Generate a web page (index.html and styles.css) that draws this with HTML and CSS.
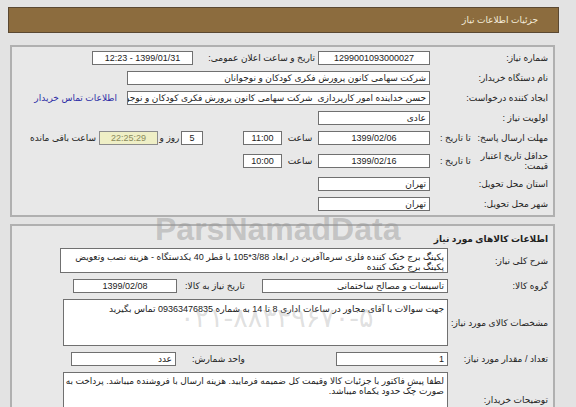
FILE: index.html
```html
<!DOCTYPE html>
<html lang="fa">
<head>
    <meta charset="UTF-8">
    <title>جزئیات اطلاعات نیاز</title>
    <link rel="stylesheet" href="styles.css">
</head>
<body>
    <div class="page" dir="rtl">
        <div class="title-bar">جزئیات اطلاعات نیاز</div>

        <div class="panel info">
            <div class="row">
                <div class="lbl">شماره نیاز:</div>
                <div class="box mid center">1299001093000027</div>
                <span class="inline-lbl stamp-lbl">تاریخ و ساعت اعلان عمومی:</span>
                <div class="box stamp center">1399/01/31 - 12:23</div>
            </div>
            <div class="row">
                <div class="lbl">نام دستگاه خریدار:</div>
                <div class="box long">شرکت سهامی کانون پرورش فکری کودکان و نوجوانان</div>
            </div>
            <div class="row">
                <div class="lbl">ایجاد کننده درخواست:</div>
                <div class="box long">حسن خداینده امور کارپردازی&nbsp; شرکت سهامی کانون پرورش فکری کودکان و نوجوانان</div>
                <a class="contact" href="#">اطلاعات تماس خریدار</a>
            </div>
            <div class="row">
                <div class="lbl">اولویت نیاز :</div>
                <div class="box mid">عادی</div>
            </div>
            <div class="row">
                <div class="lbl"><span>مهلت ارسال پاسخ:</span><span class="sub">تا تاریخ :</span></div>
                <div class="box mid center">1399/02/06</div>
                <span class="unit">ساعت</span>
                <div class="box time center">11:00</div>
                <div class="box days center">5</div>
                <span class="unit days-lbl">روز و</span>
                <div class="box left center">22:25:29</div>
                <span class="left-lbl">ساعت باقی مانده</span>
            </div>
            <div class="row">
                <div class="lbl"><span class="two-line">حداقل تاریخ اعتبار<br>قیمت:</span><span class="sub">تا تاریخ :</span></div>
                <div class="box mid center">1399/02/16</div>
                <span class="unit">ساعت</span>
                <div class="box time center">10:00</div>
            </div>
            <div class="row">
                <div class="lbl">استان محل تحویل:</div>
                <div class="box mid">تهران</div>
            </div>
            <div class="row last">
                <div class="lbl">شهر محل تحویل:</div>
                <div class="box mid">تهران</div>
            </div>
        </div>

        <div class="panel goods">
            <div class="goods-title">اطلاعات کالاهای مورد نیاز</div>
            <div class="row">
                <div class="lbl">شرح کلی نیاز:</div>
                <div class="box area desc">پکینگ برج خنک کننده فلزی سرماآفرین در ابعاد 3/88*105 با قطر 40 یکدستگاه - هزینه نصب وتعویض<br>پکینگ برج خنک کننده</div>
            </div>
            <div class="row">
                <div class="lbl">گروه کالا:</div>
                <div class="box group">تاسیسات و مصالح ساختمانی</div>
                <span class="inline-lbl need-lbl">تاریخ نیاز به کالا:</span>
                <div class="box need center">1399/02/08</div>
            </div>
            <div class="row">
                <div class="lbl">مشخصات کالای مورد نیاز:</div>
                <div class="box area specs">جهت سوالات با آقای مجاور در ساعات اداری 8 تا 14 به شماره 09363476835 تماس بگیرید</div>
            </div>
            <div class="row">
                <div class="lbl">تعداد / مقدار مورد نیاز:</div>
                <div class="box qty">1</div>
                <span class="inline-lbl unit-lbl">واحد شمارش:</span>
                <div class="box count-unit">عدد</div>
            </div>
            <div class="row last">
                <div class="lbl">توضیحات خریدار:</div>
                <div class="box area notes">لطفا پیش فاکتور با جزئیات کالا وقیمت کل ضمیمه فرمایید. هزینه ارسال با فروشنده میباشد. پرداخت به<br>صورت چک حدود یکماه میباشد.</div>
            </div>
        </div>

        <div class="wm wm-name">ParsNamadData</div>
        <div class="wm wm-phone">۰۲۱-۸۸۳۴۹۶۷۰-۵</div>
    </div>
</body>
</html>
```

FILE: styles.css
```css
body {
    margin: 0;
    background-color: #e3e3e3;
    color: #222;
    font-family: "Liberation Sans", "DejaVu Sans", sans-serif;
    font-size: 9px;
}
.page {
    position: relative;
    width: 551px;
    margin: 7px 0 0 8px;
    overflow: hidden;
    height: 400px;
}
.title-bar {
    height: 24px;
    line-height: 24px;
    padding-right: 20px;
    background-color: #8c6c3e;
    border: 1px solid #5a4832;
    color: #f4ecdc;
}
.panel {
    margin: 12px 4px 0 2px;
    padding: 4px 5px 4px 0;
    border: 2px solid #b0b0b0;
    background-color: #e8e8e8;
}
.goods {
    margin-top: 7px;
}
.row {
    display: flex;
    align-items: center;
    min-height: 14px;
    margin-bottom: 6px;
}
.row.last {
    margin-bottom: 0;
}
.lbl {
    flex: none;
    width: 118px;
    display: flex;
    justify-content: space-between;
    align-items: center;
}
.goods .lbl {
    width: 100px;
}
.lbl .sub {
    margin-left: 10px;
}
.two-line {
    line-height: 10px;
}
.box {
    flex: none;
    box-sizing: border-box;
    height: 14px;
    line-height: 12px;
    padding: 0 3px;
    background-color: #fff;
    border: 1px solid #707070;
    white-space: nowrap;
    overflow: hidden;
}
.center {
    text-align: center;
}
.mid { width: 112px; }
.stamp { width: 101px; }
.long { width: 303px; }
.time { width: 39px; }
.days { width: 22px; margin-right: 40px; }
.left {
    width: 59px;
    background-color: #efefc6;
    color: #8a8a5c;
    border-color: #8c8c8c;
}
.inline-lbl {
    flex: none;
    box-sizing: border-box;
}
.stamp-lbl {
    width: 125px;
    padding-right: 3px;
}
.unit {
    flex: none;
    width: 36px;
    text-align: center;
}
.days-lbl {
    width: 23px;
}
.left-lbl {
    margin-right: 3px;
}
.contact {
    margin-right: 10px;
    color: #2d2da6;
    text-decoration: none;
}
.goods-title {
    padding: 3px 0 0;
    margin-bottom: 3px;
    font-weight: bold;
    line-height: 12px;
}
.area {
    height: auto;
    white-space: nowrap;
    padding: 3px 3px;
    line-height: 10px;
}
.desc { width: 388px; height: 25px; }
.specs { width: 385px; height: 47px; padding-top: 4px; }
.notes { width: 385px; height: 55px; }
.group { width: 186px; }
.need-lbl {
    width: 85px;
    text-align: left;
    padding-left: 8px;
}
.need { width: 104px; }
.qty { width: 112px; }
.unit-lbl {
    width: 160px;
    text-align: left;
    padding-left: 16px;
}
.count-unit { width: 105px; }
.wm {
    position: absolute;
    pointer-events: none;
    white-space: nowrap;
}
.wm-name {
    left: 147px;
    top: 206px;
    font-size: 32px;
    line-height: 32px;
    font-weight: bold;
    color: rgba(150, 150, 150, 0.45);
}
.wm-phone {
    left: 172px;
    top: 296px;
    direction: ltr;
    font-family: "DejaVu Sans", sans-serif;
    font-size: 27px;
    line-height: 30px;
    color: rgba(150, 150, 150, 0.3);
}
```
